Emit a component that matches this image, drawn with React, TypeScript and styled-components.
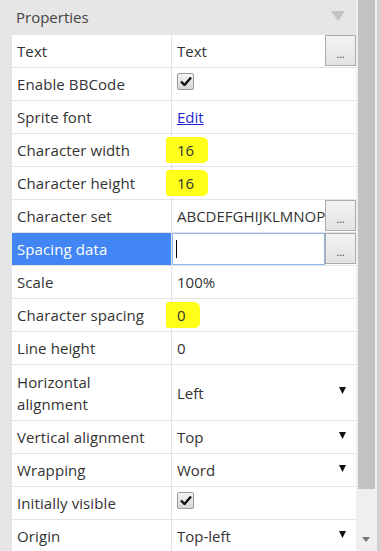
import React from "react";
import styled, { createGlobalStyle, css } from "styled-components";

const GlobalStyle = createGlobalStyle`
  html, body {
    margin: 0;
    padding: 0;
    background: #e6e6e6;
    overflow: hidden;
  }
  body {
    font-family: "Open Sans", "Noto Sans", "Liberation Sans", sans-serif;
    color: #333;
  }
`;

type Kind = "text" | "check" | "link" | "select" | "highlight" | "input";

interface Prop {
  label: string;
  value?: string;
  kind: Kind;
  button?: boolean;
  tall?: boolean;
  selected?: boolean;
}

const props: Prop[] = [
  { label: "Text", value: "Text", kind: "text", button: true },
  { label: "Enable BBCode", kind: "check" },
  { label: "Sprite font", value: "Edit", kind: "link" },
  { label: "Character width", value: "16", kind: "highlight" },
  { label: "Character height", value: "16", kind: "highlight" },
  { label: "Character set", value: "ABCDEFGHIJKLMNOPQRSTUVWXYZ", kind: "text", button: true },
  { label: "Spacing data", kind: "input", button: true, selected: true },
  { label: "Scale", value: "100%", kind: "text" },
  { label: "Character spacing", value: "0", kind: "highlight" },
  { label: "Line height", value: "0", kind: "text" },
  { label: "Horizontal alignment", value: "Left", kind: "select", tall: true },
  { label: "Vertical alignment", value: "Top", kind: "select" },
  { label: "Wrapping", value: "Word", kind: "select" },
  { label: "Initially visible", kind: "check" },
  { label: "Origin", value: "Top-left", kind: "select" },
];

const App = () => {
  return (
    <>
      <GlobalStyle />
      <Page>
        <Panel>
          <Header>
            <Title>Properties</Title>
            <Collapse viewBox="0 0 14 10">
              <path d="M0 0 H14 L7 10 Z" fill="#c4c4c4" />
            </Collapse>
          </Header>
          <Grid>
            {props.map((p) => (
              <Row key={p.label} $tall={p.tall}>
                <Label $selected={p.selected}>{p.label}</Label>
                <Value>
                  {renderValue(p)}
                  {p.button && <DotsButton>...</DotsButton>}
                </Value>
              </Row>
            ))}
          </Grid>
        </Panel>
        <Scrollbar>
          <Thumb />
          <ScrollArrow viewBox="0 0 8 5">
            <path d="M0 0 H8 L4 5 Z" fill="#777" />
          </ScrollArrow>
        </Scrollbar>
        <Edge />
      </Page>
    </>
  );
};

function renderValue(p: Prop) {
  switch (p.kind) {
    case "check":
      return (
        <CheckBox>
          <svg width="12" height="10" viewBox="0 0 12 10">
            <path d="M1 5.5 L4.5 9 L11 1.5" stroke="#111" strokeWidth="2.4" fill="none" />
          </svg>
        </CheckBox>
      );
    case "link":
      return <LinkText>{p.value}</LinkText>;
    case "highlight":
      return <Highlight>{p.value}</Highlight>;
    case "input":
      return (
        <InputBox>
          <Caret />
        </InputBox>
      );
    case "select":
      return (
        <>
          <ValueText>{p.value}</ValueText>
          <SelectArrow viewBox="0 0 8 8">
            <path d="M0 0 H8 L4 8 Z" fill="#111" />
          </SelectArrow>
        </>
      );
    default:
      return <ValueText $clip={p.button}>{p.value}</ValueText>;
  }
}

export default App;

const Page = styled.div`
  display: flex;
  width: 381px;
  height: 551px;
  overflow: hidden;
`;

const Panel = styled.div`
  width: 356px;
  padding-left: 11px;
  box-sizing: border-box;
  display: flex;
  flex-direction: column;
`;

const Header = styled.div`
  height: 35px;
  flex-shrink: 0;
  display: flex;
  align-items: center;
  justify-content: space-between;
  padding: 0 11px 0 5px;
  box-sizing: border-box;
`;

const Title = styled.span`
  font-size: 15px;
  color: #444;
  margin-top: -2px;
`;

const Collapse = styled.svg`
  width: 14px;
  height: 10px;
  margin-top: -4px;
`;

const Grid = styled.div`
  background: #fff;
  border-left: 1px solid #e3e3e3;
`;

const Row = styled.div<{ $tall?: boolean }>`
  display: grid;
  grid-template-columns: 160px 1fr;
  height: ${(p) => (p.$tall ? 55 : 32)}px;
  border-bottom: 1px solid #e3e3e3;
`;

const Label = styled.div<{ $selected?: boolean }>`
  display: flex;
  align-items: center;
  padding: 0 20px 0 5px;
  font-size: 15px;
  line-height: 22px;
  letter-spacing: 0.1px;
  border-right: 1px solid #e3e3e3;
  ${(p) =>
    p.$selected &&
    css`
      background: #4285f4;
      color: #fff;
    `}
`;

const Value = styled.div`
  position: relative;
  display: flex;
  align-items: center;
  padding-left: 5px;
  font-size: 15px;
  min-width: 0;
`;

const ValueText = styled.span<{ $clip?: boolean }>`
  flex: 1;
  white-space: nowrap;
  overflow: hidden;
  ${(p) => p.$clip && css`margin-right: 31px;`}
`;

const LinkText = styled.span`
  color: #1f1fd6;
  text-decoration: underline;
`;

const Highlight = styled.span`
  position: relative;
  z-index: 1;
  margin-left: -11px;
  padding: 3px 14px 3px 11px;
  background: #ffff1a;
  border-radius: 3px 6px 5px 2px;
`;

const CheckBox = styled.span`
  width: 15px;
  height: 15px;
  margin-top: -6px;
  border: 1px solid #9a9a9a;
  border-radius: 2px;
  background: linear-gradient(#f4f4f4, #d6d6d6);
  display: flex;
  align-items: center;
  justify-content: center;
`;

const DotsButton = styled.button`
  position: absolute;
  right: 0;
  top: 0;
  width: 31px;
  height: 31px;
  padding: 0 0 4px;
  border: 1px solid #acacac;
  background: linear-gradient(#f3f3f3, #e2e2e2);
  font-family: inherit;
  font-size: 10px;
  color: #333;
  display: flex;
  align-items: flex-end;
  justify-content: center;
`;

const InputBox = styled.div`
  position: absolute;
  left: 0;
  top: 0;
  bottom: 0;
  right: 31px;
  border: 1px solid #8fb6ec;
  background: #fff;
  display: flex;
  align-items: center;
  padding-left: 3px;
`;

const Caret = styled.span`
  width: 1px;
  height: 18px;
  background: #000;
`;

const SelectArrow = styled.svg`
  width: 7px;
  height: 7px;
  margin-right: 10px;
  margin-top: -4px;
`;

const Scrollbar = styled.div`
  width: 21px;
  background: #efefef;
  position: relative;
  display: flex;
  flex-direction: column;
  align-items: center;
`;

const Thumb = styled.div`
  width: 17px;
  height: 489px;
  background: #c2c2c2;
  margin-left: 2px;
  align-self: flex-start;
`;

const ScrollArrow = styled.svg`
  width: 8px;
  height: 5px;
  margin-top: 48px;
  margin-right: 2px;
`;

const Edge = styled.div`
  width: 4px;
  background: #d2d2d2;
`;
